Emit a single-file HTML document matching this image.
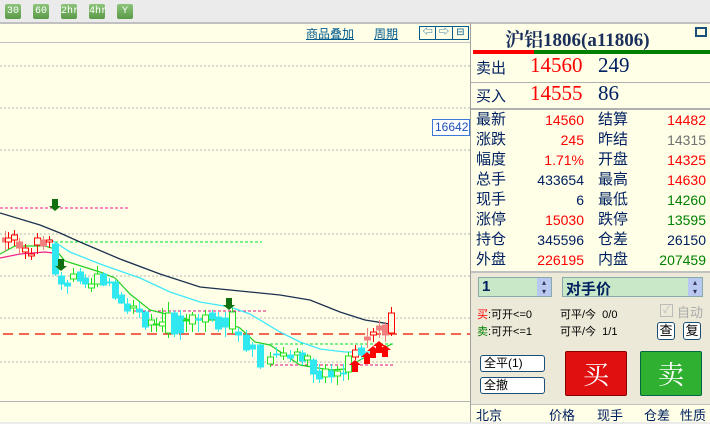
<!DOCTYPE html>
<html><head><meta charset="utf-8"><style>
*{margin:0;padding:0;box-sizing:border-box}
body{width:710px;height:422px;overflow:hidden;background:#ebebeb;font-family:"Liberation Sans","Noto Sans CJK SC",sans-serif;position:relative}
.tb{position:absolute;top:4px;width:16px;height:15px;background:linear-gradient(#8cc47a,#5a9a48);border-radius:2px;color:#fff;font:10px "Liberation Mono",monospace;text-align:center;line-height:15px}
#chart{position:absolute;left:0;top:22px;width:470px;height:400px;background:#ffffe8;border-top:2px solid #c0c0c0}
#rp{position:absolute;left:470px;top:22px;width:240px;height:400px;background:#ffffe8;border-top:2px solid #c0c0c0;border-left:1px solid #a0a0a0}
.a{position:absolute;font-size:14px;white-space:nowrap}
.q{position:absolute;white-space:nowrap;height:20px;line-height:20px}
.r{color:#f00}.b{color:#002060}.g{color:#008000}.gr{color:#707070}
.hl{position:absolute;left:0;width:240px;height:1px;background:#b0b0b0}
</style></head><body>
<div class="tb" style="left:5px">30</div><div class="tb" style="left:33px">60</div><div class="tb" style="left:61px">2hr</div><div class="tb" style="left:89px">4hr</div><div class="tb" style="left:117px">Y</div>
<div id="chart">
<div style="position:absolute;left:0;top:0;width:470px;height:19px;border-bottom:1px solid #c0c0c0"></div>
<div class="a" style="left:306px;top:1px;font-size:12px;color:#005a8c;text-decoration:underline">商品叠加</div>
<div class="a" style="left:374px;top:1px;font-size:12px;color:#005a8c;text-decoration:underline">周期</div>
<div style="position:absolute;left:419px;top:2px;width:50px;height:14px;border:1px solid #005a8c;font-size:10px;color:#005a8c;display:flex"><span style="flex:1;border-right:1px solid #005a8c;text-align:center;line-height:12px">⇦</span><span style="flex:1;border-right:1px solid #005a8c;text-align:center;line-height:12px">⇨</span><span style="flex:1;text-align:center;line-height:12px">⊟</span></div>
<div style="position:absolute;left:432px;top:95px;width:38px;height:17px;border:1px solid #3c78d8;background:#fff;color:#1e50b4;font-size:12px;line-height:15px;padding-left:2px">16642</div>
<svg id="sv" width="470" height="400" style="position:absolute;left:0;top:-22px" xmlns="http://www.w3.org/2000/svg">
<g stroke="#b4b4b4" stroke-dasharray="2,2">
<line x1="0" y1="64" x2="470" y2="64"/><line x1="0" y1="106" x2="470" y2="106"/><line x1="0" y1="148" x2="470" y2="148"/><line x1="0" y1="232" x2="470" y2="232"/><line x1="0" y1="274" x2="470" y2="274"/><line x1="0" y1="316" x2="470" y2="316"/><line x1="0" y1="360" x2="470" y2="360"/></g>
<line x1="0" y1="399.5" x2="470" y2="399.5" stroke="#b4b4b4"/>
<line x1="3" y1="332" x2="470" y2="332" stroke="#f03020" stroke-width="1.5" stroke-dasharray="10,6"/>
<line x1="0" y1="206" x2="130" y2="206" stroke="#ff1493" stroke-dasharray="3,2"/>
<line x1="55" y1="240" x2="262" y2="240" stroke="#00e030" stroke-dasharray="3,2"/>
<line x1="133" y1="309" x2="267" y2="309" stroke="#e01080" stroke-dasharray="3,2"/>
<line x1="270" y1="342" x2="393" y2="342" stroke="#00e030" stroke-dasharray="3,2"/>
<line x1="270" y1="363" x2="393" y2="363" stroke="#e01080" stroke-dasharray="3,2"/>
<polyline fill="none" stroke="#1c3050" stroke-width="1.3" points="0,211 40,223 60,231 80,240 120,257 160,272 200,285 240,289 280,293 310,298 340,310 365,318 390,322"/>
<polyline fill="none" stroke="#40e8f8" stroke-width="1.3" points="50,237 70,250 100,262 140,276 170,290 200,300 230,305 250,312 280,330 300,340 320,347 345,350 370,350"/>
<polyline fill="none" stroke="#20d020" stroke-width="1.2" points="0,252 15,244 45,244 55,247 65,259 100,270 115,276 130,292 150,308 190,318 220,318 240,326 255,340 270,343 300,363 330,368 345,367 360,358 375,350 392,342"/>
<polyline fill="none" stroke="#f0208c" stroke-width="1.2" points="0,256 20,252 45,250 53,251"/>
<g id="cd"></g>
<rect x="389" y="416" width="5" height="6" fill="none" stroke="#f00"/>
</svg>
</div>
<div id="rp">
<div class="a b" style="left:34px;top:1px;font:bold 19px 'Liberation Serif','Noto Serif CJK SC',serif;color:#1a2f5a">沪铝1806(a11806)</div>
<div style="position:absolute;left:224px;top:3px;width:12px;height:10px;border:2px solid #1a4f7a"></div>
<div style="position:absolute;left:2px;top:26px;width:61px;height:4px;background:#f00"></div>
<div style="position:absolute;left:63px;top:26px;width:177px;height:4px;background:#008000"></div>
<div class="a b" style="left:5px;top:33px;font-size:15px">卖出</div>
<div class="a r" style="left:59px;top:29px;font-size:21px;font-family:'Liberation Serif',serif">14560</div>
<div class="a b" style="left:127px;top:29px;font-size:21px;font-family:'Liberation Serif',serif">249</div>
<div class="hl" style="top:58px"></div>
<div class="a b" style="left:5px;top:61px;font-size:15px">买入</div>
<div class="a r" style="left:59px;top:57px;font-size:21px;font-family:'Liberation Serif',serif">14555</div>
<div class="a b" style="left:127px;top:57px;font-size:21px;font-family:'Liberation Serif',serif">86</div>
<div class="hl" style="top:84px;height:2px"></div>
<div id="rows"></div>
<div style="position:absolute;left:0;top:247px;width:240px;height:134px;background:#ece9d8;border-top:2px solid #c0c0c0"></div>
<div style="position:absolute;left:7px;top:253px;width:74px;height:20px;background:#c8e8c8;border:1px solid #8aa;"><span class="a b" style="left:3px;top:0;font-weight:bold;font-size:15px">1</span><span style="position:absolute;right:0;top:0;width:14px;height:18px;background:#b8c8f0;font-size:8px;text-align:center;color:#335">▴<br>▾</span></div>
<div style="position:absolute;left:91px;top:253px;width:141px;height:20px;background:#c8e8c8;border:1px solid #8aa;"><span class="a b" style="left:3px;top:0;font-weight:bold;font-size:15px">对手价</span><span style="position:absolute;right:0;top:0;width:14px;height:18px;background:#b8c8f0;font-size:8px;text-align:center;color:#335">▴<br>▾</span></div>
<div class="a" style="left:6px;top:282px;font-size:11px"><span class="r">买</span>:可开&lt;=0</div>
<div class="a" style="left:6px;top:299px;font-size:11px"><span class="g">卖</span>:可开&lt;=1</div>
<div class="a" style="left:89px;top:282px;font-size:11px">可平/今 &nbsp;0/0</div>
<div class="a" style="left:89px;top:299px;font-size:11px">可平/今 &nbsp;1/1</div>
<div style="position:absolute;left:189px;top:280px;width:13px;height:13px;border:1px solid #bbb;color:#bbb;font-size:10px;text-align:center;line-height:11px">✓</div>
<div class="a" style="left:206px;top:278px;font-size:13px;color:#aaa">自动</div>
<div style="position:absolute;left:186px;top:298px;width:18px;height:18px;border:1px solid #1a4f7a;border-radius:3px;background:#fff;font-size:13px;text-align:center;line-height:16px">查</div>
<div style="position:absolute;left:212px;top:298px;width:18px;height:18px;border:1px solid #1a4f7a;border-radius:3px;background:#fff;font-size:13px;text-align:center;line-height:16px">复</div>
<div style="position:absolute;left:9px;top:331px;width:65px;height:17px;border:1px solid #1a4f7a;border-radius:3px;background:#fff;font-size:12px;padding-left:3px;line-height:15px">全平(1)</div>
<div style="position:absolute;left:9px;top:353px;width:65px;height:17px;border:1px solid #1a4f7a;border-radius:3px;background:#fff;font-size:12px;padding-left:3px;line-height:15px">全撤</div>
<div style="position:absolute;left:94px;top:327px;width:62px;height:45px;background:#e01010;border:1px solid #800;border-radius:2px;color:#fff;font:26px 'Noto Serif CJK SC',serif;text-align:center;line-height:43px">买</div>
<div style="position:absolute;left:169px;top:327px;width:62px;height:45px;background:#30b030;border:1px solid #064;border-radius:2px;color:#fff;font:26px 'Noto Serif CJK SC',serif;text-align:center;line-height:43px">卖</div>
<div style="position:absolute;left:0;top:380px;width:240px;height:1px;background:#c0c0c0"></div>
<div class="a b" style="left:5px;top:381px;font-size:13px">北京</div>
<div class="a b" style="left:78px;top:381px;font-size:13px">价格</div>
<div class="a b" style="left:126px;top:381px;font-size:13px">现手</div>
<div class="a b" style="left:173px;top:381px;font-size:13px">仓差</div>
<div class="a b" style="left:209px;top:381px;font-size:13px">性质</div>
</div>
<script>
var rows=[["最新","14560","r","结算","14482","r"],["涨跌","245","r","昨结","14315","gr"],["幅度","1.71%","r","开盘","14325","r"],["总手","433654","b","最高","14630","r"],["现手","6","b","最低","14260","g"],["涨停","15030","r","跌停","13595","g"],["持仓","345596","b","仓差","26150","b"],["外盘","226195","r","内盘","207459","g"]];
var h="";rows.forEach(function(r,i){var t=86+i*20;h+='<div class="q b" style="left:5px;top:'+t+'px;font-size:15px">'+r[0]+'</div><div class="q '+r[2]+'" style="right:126px;top:'+t+'px;font-size:14px">'+r[1]+'</div><div class="q b" style="left:127px;top:'+t+'px;font-size:15px">'+r[3]+'</div><div class="q '+r[5]+'" style="right:4px;top:'+t+'px;font-size:14px">'+r[4]+'</div>';});
document.getElementById("rows").innerHTML=h;
var C={p:["#f08080","#f08080"],r:["none","#f00"],c:["#30e8f0","#30e8f0"],g:["none","#20e020"],R:["#f00","#f00"]};
var cs=[[5,236,240,229,250,"p"],[8,236,240,230,247,"r"],[14,233,238,228,244,"r"],[19,240,246,236,252,"p"],[25,246,250,242,257,"r"],[31,252,254,246,258,"r"],[37,236,243,231,252,"r"],[43,238,244,234,248,"p"],[49,238,240,234,246,"r"],[55,242,272,240,274,"c"],[61,274,282,270,288,"c"],[67,281,284,278,292,"c"],[73,272,277,266,280,"g"],[80,270,279,266,282,"c"],[85,276,282,272,286,"c"],[91,282,286,276,290,"g"],[97,272,282,264,285,"g"],[103,272,283,270,284,"c"],[109,280,281,276,284,"c"],[115,280,296,278,298,"c"],[121,293,301,290,302,"c"],[127,302,309,296,312,"c"],[133,304,306,298,312,"g"],[139,307,310,300,316,"c"],[145,310,325,308,328,"c"],[151,318,323,312,330,"g"],[156,322,323,316,330,"g"],[162,320,324,306,330,"g"],[168,311,331,300,336,"g"],[174,311,332,308,335,"c"],[180,314,331,308,338,"c"],[186,318,319,312,330,"g"],[192,313,322,310,330,"g"],[198,317,318,312,330,"c"],[205,313,320,308,330,"g"],[212,311,317,308,320,"c"],[218,315,327,310,330,"c"],[225,316,325,310,335,"c"],[232,310,327,306,332,"g"],[238,330,333,326,340,"c"],[246,333,348,328,350,"c"],[252,343,347,340,355,"c"],[260,343,365,342,367,"c"],[270,355,362,350,365,"g"],[276,352,353,345,356,"c"],[283,351,354,345,358,"g"],[290,353,356,348,360,"c"],[297,350,353,346,360,"g"],[302,351,359,348,363,"c"],[307,354,358,352,365,"g"],[313,358,372,356,381,"c"],[319,369,377,362,381,"c"],[325,367,375,362,381,"g"],[331,369,375,362,381,"c"],[337,369,374,364,383,"g"],[343,371,372,362,379,"c"],[348,354,370,350,378,"g"],[355,348,355,343,358,"r"],[361,346,353,343,358,"c"],[367,335,338,326,346,"p"],[373,330,333,326,340,"r"],[379,324,328,318,336,"p"],[385,323,333,320,340,"p"],[391,311,331,305,334,"r"]];
var s="";cs.forEach(function(c){var col=C[c[5]];s+='<line x1="'+(c[0]+.5)+'" y1="'+c[3]+'" x2="'+(c[0]+.5)+'" y2="'+c[4]+'" stroke="'+col[1]+'"/><rect x="'+(c[0]-2.5)+'" y="'+c[1]+'" width="6" height="'+Math.max(1,c[2]-c[1])+'" fill="'+(col[0]=="none"?"#ffffe8":col[0])+'" stroke="'+col[1]+'"/>';});
function arr(x,y,up,col){var p=up?[[x-3,y+12],[x-3,y+5],[x-6,y+5],[x,y],[x+6,y+5],[x+3,y+5],[x+3,y+12]]:[[x-3,y],[x-3,y+7],[x-6,y+7],[x,y+12],[x+6,y+7],[x+3,y+7],[x+3,y]];s+='<polygon fill="'+col+'" points="'+p.join(" ")+'"/>';}
arr(55,197,0,"#107010");arr(61,257,0,"#107010");arr(229,296,0,"#107010");
arr(355,358,1,"#f00");arr(367,350,1,"#f00");arr(373,344,1,"#f00");arr(379,339,1,"#f00");arr(385,343,1,"#f00");
document.getElementById("cd").innerHTML=s;
</script>
</body></html>
